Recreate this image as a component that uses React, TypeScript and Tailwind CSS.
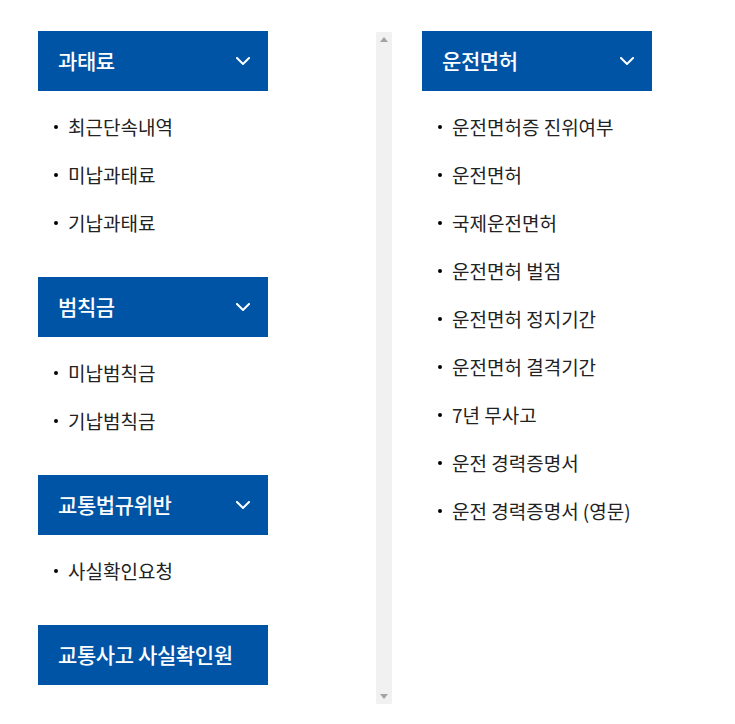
type Section = {
  title: string
  items: string[]
  toggle?: boolean
}

const leftSections: Section[] = [
  { title: '과태료', items: ['최근단속내역', '미납과태료', '기납과태료'], toggle: true },
  { title: '범칙금', items: ['미납범칙금', '기납범칙금'], toggle: true },
  { title: '교통법규위반', items: ['사실확인요청'], toggle: true },
  { title: '교통사고 사실확인원', items: [] },
]

const rightSections: Section[] = [
  {
    title: '운전면허',
    items: [
      '운전면허증 진위여부',
      '운전면허',
      '국제운전면허',
      '운전면허 벌점',
      '운전면허 정지기간',
      '운전면허 결격기간',
      '7년 무사고',
      '운전 경력증명서',
      '운전 경력증명서 (영문)',
    ],
    toggle: true,
  },
]

function Chevron() {
  return (
    <svg width="14" height="8" viewBox="0 0 14 8" fill="none" className="shrink-0">
      <path d="M1 1l6 6 6-6" stroke="white" strokeWidth="2" strokeLinecap="square" />
    </svg>
  )
}

function MenuBlock({ section }: { section: Section }) {
  return (
    <div className="mb-[42px] w-[230px]">
      <div className="h-[60px] bg-[#0054a6] text-white flex items-center justify-between pl-[20px] pr-[18px]">
        <span className="text-[21px] font-medium tracking-[-0.4px] whitespace-nowrap">{section.title}</span>
        {section.toggle && <Chevron />}
      </div>
      {section.items.length > 0 && (
        <ul className="pt-3 pl-[16px] -mb-[12px]">
          {section.items.map((item) => (
            <li key={item} className="h-12 flex items-center gap-[10px] text-[19px] text-[#222]">
              <span className="w-1 h-1 rounded-full bg-black shrink-0" />
              <span className="whitespace-nowrap">{item}</span>
            </li>
          ))}
        </ul>
      )}
    </div>
  )
}

function Scrollbar() {
  return (
    <div className="mt-px w-[16px] h-[672px] bg-[#f1f1f1] flex flex-col items-center justify-between py-[5px] shrink-0">
      <svg width="8" height="5" viewBox="0 0 8 5">
        <path d="M4 0L8 5H0z" fill="#a3a3a3" />
      </svg>
      <svg width="8" height="5" viewBox="0 0 8 5">
        <path d="M0 0h8L4 5z" fill="#a3a3a3" />
      </svg>
    </div>
  )
}

export default function App() {
  return (
    <div
      className="w-[735px] h-[724px] bg-white flex items-start pt-[31px]"
      style={{ fontFamily: '"Noto Sans CJK KR", "Noto Sans", sans-serif' }}
    >
      <div className="w-[376px] pl-[38px] shrink-0">
        {leftSections.map((s) => (
          <MenuBlock key={s.title} section={s} />
        ))}
      </div>
      <Scrollbar />
      <div className="ml-[30px]">
        {rightSections.map((s) => (
          <MenuBlock key={s.title} section={s} />
        ))}
      </div>
    </div>
  )
}
